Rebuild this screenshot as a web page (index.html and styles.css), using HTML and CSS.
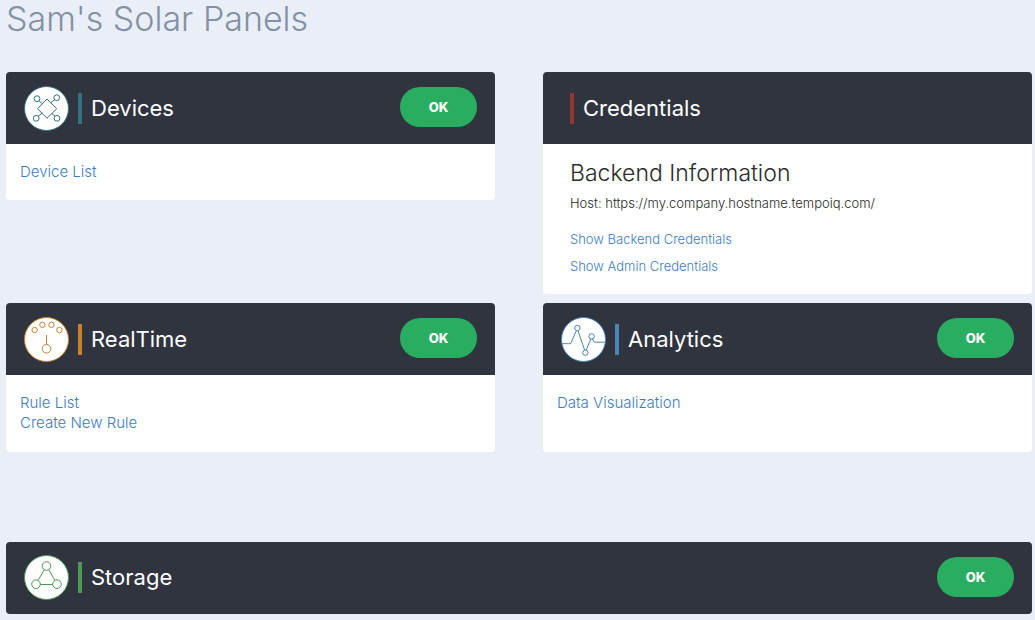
FILE: index.html
```html
<!DOCTYPE html>
<html lang="en">
<head>
<meta charset="utf-8">
<meta name="viewport" content="width=device-width, initial-scale=1">
<title>Sam's Solar Panels</title>
<link rel="stylesheet" href="styles.css">
</head>
<body>
<main class="page">
  <h1 class="page-title">Sam's Solar Panels</h1>
  <div class="grid">
    <section class="card devices">
      <header class="card-head">
        <svg class="icon" viewBox="0 0 45 45" aria-hidden="true">
          <circle class="disc" cx="22.5" cy="22.5" r="22"/>
          <path d="M23 13l9.7 9.7-9.7 9.6-9.5-9.6zM15 14.8l3.4 3M30.5 13.8l-4 3M14.2 30.2l4-3.2M31 30.2l-3.4-2.8"/>
          <circle cx="13" cy="12.7" r="2.9"/><circle cx="32.7" cy="11.7" r="2.9"/>
          <circle cx="12.2" cy="32.3" r="2.9"/><circle cx="33" cy="32.3" r="2.9"/>
        </svg>
        <h2 class="card-title">Devices</h2>
        <button class="status" type="button">OK</button>
      </header>
      <div class="card-body links"><a href="#devices">Device List</a></div>
    </section>

    <section class="card credentials">
      <header class="card-head">
        <h2 class="card-title">Credentials</h2>
      </header>
      <div class="card-body">
        <h3 class="subtitle">Backend Information</h3>
        <p class="host">Host: https://my.company.hostname.tempoiq.com/</p>
        <a class="reveal" href="#backend">Show Backend Credentials</a>
        <a class="reveal" href="#admin">Show Admin Credentials</a>
      </div>
    </section>

    <section class="card realtime">
      <header class="card-head">
        <svg class="icon" viewBox="0 0 45 45" aria-hidden="true">
          <circle class="disc" cx="22.5" cy="22.5" r="22"/>
          <circle cx="10.6" cy="13" r="2.7"/><circle cx="18.4" cy="7.8" r="2.7"/>
          <circle cx="27.4" cy="7.8" r="2.7"/><circle cx="35.4" cy="13" r="2.7"/>
          <path d="M22.5 18v9.5"/><circle cx="22.5" cy="31.8" r="4.3"/>
        </svg>
        <h2 class="card-title">RealTime</h2>
        <button class="status" type="button">OK</button>
      </header>
      <div class="card-body links">
        <a href="#rules">Rule List</a>
        <a href="#new-rule">Create New Rule</a>
      </div>
    </section>

    <section class="card analytics">
      <header class="card-head">
        <svg class="icon" viewBox="0 0 45 45" aria-hidden="true">
          <circle class="disc" cx="22.5" cy="22.5" r="22"/>
          <path d="M1 26.7h8.7l5.7-13.2M17 13.7l6.6 19.4M25.2 33.1l4.7-11.2M31.4 22l1.4 2.7 1.5.5h10"/>
          <circle cx="16.4" cy="11" r="2.7"/><circle cx="24.4" cy="35.7" r="2.7"/><circle cx="30.6" cy="19.4" r="2.7"/>
        </svg>
        <h2 class="card-title">Analytics</h2>
        <button class="status" type="button">OK</button>
      </header>
      <div class="card-body links"><a href="#visualization">Data Visualization</a></div>
    </section>
  </div>

  <section class="card storage">
    <header class="card-head">
      <svg class="icon" viewBox="0 0 45 45" aria-hidden="true">
        <circle class="disc" cx="22.5" cy="22.5" r="22"/>
        <circle cx="22.5" cy="11" r="4.3"/><circle cx="12" cy="29.2" r="4.3"/><circle cx="33" cy="29.2" r="4.3"/>
        <path d="M20.2 14.8l-6 10.5M24.8 14.8l6 10.5M16.4 29.5h12.2"/>
      </svg>
      <h2 class="card-title">Storage</h2>
      <button class="status" type="button">OK</button>
    </header>
  </section>
</main>
</body>
</html>
```
FILE: styles.css
```css
* { box-sizing: border-box; }

body {
  margin: 0;
  background: #eaeef6;
  color: #2b2b2b;
  font-family: Inter, "Open Sans", "Liberation Sans", sans-serif;
}

h1, h2, h3, p { margin: 0; }

a { color: #3a80c6; text-decoration: none; }
a:hover { text-decoration: underline; }

.page { padding: 0 3px 6px 6px; }

.page-title {
  color: #8291a6;
  font-size: 34px;
  font-weight: 300;
  line-height: 38px;
}

.grid {
  display: grid;
  grid-template-columns: 1fr 1fr;
  gap: 9px 48px;
  margin-top: 34px;
}

.card {
  --accent: #357180;
  background: #fff;
  border-radius: 4px;
  overflow: hidden;
}
.devices { align-self: start; }
.credentials { --accent: #943634; }
.realtime { --accent: #c9822b; }
.analytics { --accent: #4a86b3; }
.storage { --accent: #4a9a50; margin-top: 90px; }

.card-head {
  display: flex;
  align-items: center;
  gap: 9px;
  height: 72px;
  padding: 0 18px;
  background: #30343f;
}

.icon {
  flex: none;
  width: 45px;
  height: 45px;
  fill: none;
  stroke: var(--accent);
  stroke-width: 1;
}
.disc { fill: #fff; }

.card-title {
  flex: 1;
  padding-left: 9px;
  border-left: 4px solid var(--accent);
  color: #fff;
  font-size: 22px;
  font-weight: 400;
  line-height: 31px;
}

.status {
  width: 77px;
  height: 40px;
  margin-bottom: 2px;
  border: 0;
  border-radius: 20px;
  background: #29ae61;
  color: #fff;
  font: 800 13px/20px Inter, "Open Sans", sans-serif;
}

.storage .card-head { padding-bottom: 2px; }
.storage .status { margin-bottom: 0; }

.links {
  display: flex;
  flex-direction: column;
  align-items: flex-start;
  padding: 18px 14px;
  font-size: 15px;
  font-weight: 300;
  line-height: 20px;
}
.realtime .links { padding-bottom: 19px; }

.credentials .card-head { padding-left: 27px; }
.credentials .card-body {
  display: flex;
  flex-direction: column;
  align-items: flex-start;
  padding: 16px 27px 14px;
  font-size: 13px;
  font-weight: 300;
}
.subtitle {
  font-size: 23px;
  font-weight: 300;
  line-height: 27px;
}
.host { margin: 6px 0 12px; line-height: 21px; }
.reveal { line-height: 27px; }
```
